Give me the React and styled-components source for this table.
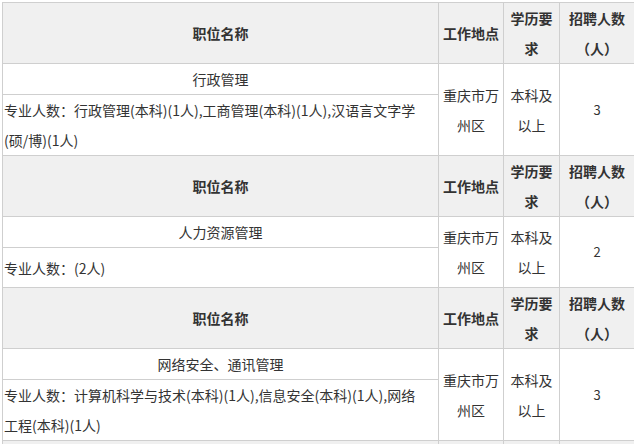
import React from "react";
import styled, { createGlobalStyle } from "styled-components";

const GlobalStyle = createGlobalStyle`
  html, body {
    margin: 0;
    padding: 0;
    overflow: hidden;
    background: #fff;
  }
  body {
    font-family: "Noto Sans CJK SC", sans-serif;
    font-size: 14px;
    color: #333;
  }
`;

const Page = styled.div`
  padding: 2px 0 0 2px;
`;

const Table = styled.table`
  width: 632px;
  table-layout: fixed;
  border-collapse: collapse;
  font-size: 14px;
  line-height: 30px;

  td, th {
    border: 1px solid #cfcfcf;
    padding: 0 3px;
    text-align: center;
    vertical-align: middle;
    word-break: break-all;
  }
`;

const HeadCell = styled.th`
  background: #f0f0f0;
  font-weight: bold;
  color: #333;
  height: ${(p) => (p.$stub ? "4px" : "60px")};
`;

const TitleCell = styled.td`
  height: 30px;
`;

const SpecCell = styled.td`
  && {
    text-align: left;
    padding: 0 1px;
  }
  height: ${(p) => (p.$short ? "39px" : "60px")};
`;

const SpecLine = styled.span`
  display: block;
  white-space: nowrap;
`;

const CountCell = styled.td`
  font-size: 13px;
`;

const jobs = [
  {
    title: "行政管理",
    spec: ["专业人数：行政管理(本科)(1人),工商管理(本科)(1人),汉语言文字学", "(硕/博)(1人)"],
    count: 3,
  },
  {
    title: "人力资源管理",
    spec: ["专业人数：(2人)"],
    count: 2,
    short: true,
  },
  {
    title: "网络安全、通讯管理",
    spec: ["专业人数：计算机科学与技术(本科)(1人),信息安全(本科)(1人),网络", "工程(本科)(1人)"],
    count: 3,
  },
];

export default function App() {
  return (
    <>
      <GlobalStyle />
      <Page>
        <Table>
          <colgroup>
            <col style={{ width: 436 }} />
            <col style={{ width: 65 }} />
            <col style={{ width: 56 }} />
            <col style={{ width: 75 }} />
          </colgroup>
          <tbody>
            {jobs.map((job, i) => (
              <React.Fragment key={i}>
                <tr>
                  <HeadCell>职位名称</HeadCell>
                  <HeadCell>工作地点</HeadCell>
                  <HeadCell>学历要求</HeadCell>
                  <HeadCell>招聘人数（人）</HeadCell>
                </tr>
                <tr>
                  <TitleCell>{job.title}</TitleCell>
                  <td rowSpan={2}>重庆市万州区</td>
                  <td rowSpan={2}>本科及以上</td>
                  <CountCell rowSpan={2}>{job.count}</CountCell>
                </tr>
                <tr>
                  <SpecCell $short={job.short}>
                    {job.spec.map((line) => (
                      <SpecLine key={line}>{line}</SpecLine>
                    ))}
                  </SpecCell>
                </tr>
              </React.Fragment>
            ))}
            <tr>
              <HeadCell $stub />
              <HeadCell $stub />
              <HeadCell $stub />
              <HeadCell $stub />
            </tr>
          </tbody>
        </Table>
      </Page>
    </>
  );
}
